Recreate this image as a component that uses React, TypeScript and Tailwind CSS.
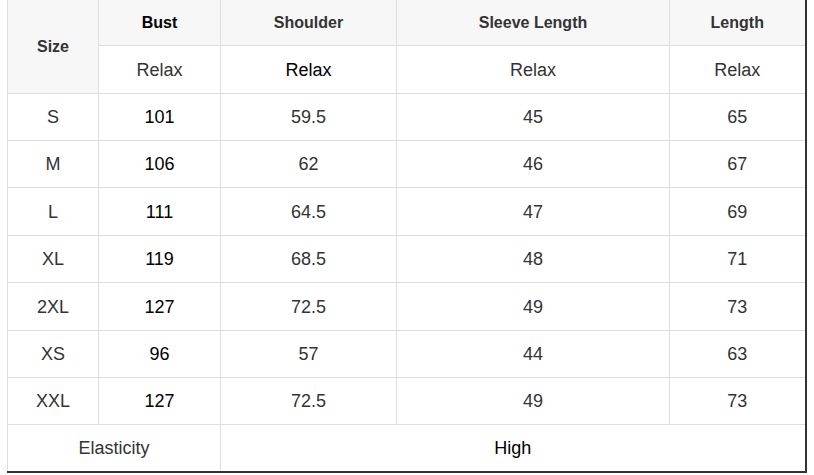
const rows: [string, string, string, string, string][] = [
  ["S", "101", "59.5", "45", "65"],
  ["M", "106", "62", "46", "67"],
  ["L", "111", "64.5", "47", "69"],
  ["XL", "119", "68.5", "48", "71"],
  ["2XL", "127", "72.5", "49", "73"],
  ["XS", "96", "57", "44", "63"],
  ["XXL", "127", "72.5", "49", "73"],
];

const heights = ["h-[47px]", "h-[47px]", "h-[48px]", "h-[47px]", "h-[48px]", "h-[47px]", "h-[47px]"];

export default function App() {
  const cell = "border border-[#dedede] text-center align-middle p-0 pt-[2px]";
  const head = "border border-[#dedede] border-t-0 text-center align-middle p-0 pt-[2px] text-[16px] font-bold";
  return (
    <div className="w-[814px] h-[475px] bg-white pl-[7px] font-['Liberation_Sans',Arial,sans-serif]">
      <table className="table-fixed border-collapse w-[798px]">
        <colgroup>
          <col className="w-[91px]" />
          <col className="w-[122px]" />
          <col className="w-[176px]" />
          <col className="w-[273px]" />
          <col className="w-[136px]" />
        </colgroup>
        <thead>
          <tr className="h-[45px] bg-[#f7f7f7]">
            <th rowSpan={2} className={`${head} pt-0 text-[#333]`}>Size</th>
            <th className={`${head} text-black`}>Bust</th>
            <th className={`${head} text-[#333]`}>Shoulder</th>
            <th className={`${head} text-[#333]`}>Sleeve Length</th>
            <th className={`${head} border-r-2 border-r-[#333] text-[#333]`}>Length</th>
          </tr>
          <tr className="h-[48px]">
            <td className={`${cell} bg-white text-[18px] text-[#333]`}>Relax</td>
            <td className={`${cell} bg-white text-[18px] text-black`}>Relax</td>
            <td className={`${cell} bg-white text-[18px] text-[#333]`}>Relax</td>
            <td className={`${cell} border-r-2 border-r-[#333] bg-white text-[18px] text-[#333]`}>Relax</td>
          </tr>
        </thead>
        <tbody>
          {rows.map((r, i) => (
            <tr key={i} className={heights[i]}>
              <td className={`${cell} text-[18px] text-[#333]`}>{r[0]}</td>
              <td className={`${cell} text-[18px] text-black`}>{r[1]}</td>
              <td className={`${cell} text-[18px] text-[#333]`}>{r[2]}</td>
              <td className={`${cell} text-[18px] text-[#333]`}>{r[3]}</td>
              <td className={`${cell} border-r-2 border-r-[#333] text-[18px] text-[#333]`}>{r[4]}</td>
            </tr>
          ))}
          <tr className="h-[48px]">
            <td colSpan={2} className={`${cell} border-b-2 border-b-[#333] text-[18px] text-[#333]`}>Elasticity</td>
            <td colSpan={3} className={`${cell} border-b-2 border-b-[#333] border-r-2 border-r-[#333] text-[18px] text-black`}>High</td>
          </tr>
        </tbody>
      </table>
    </div>
  );
}
